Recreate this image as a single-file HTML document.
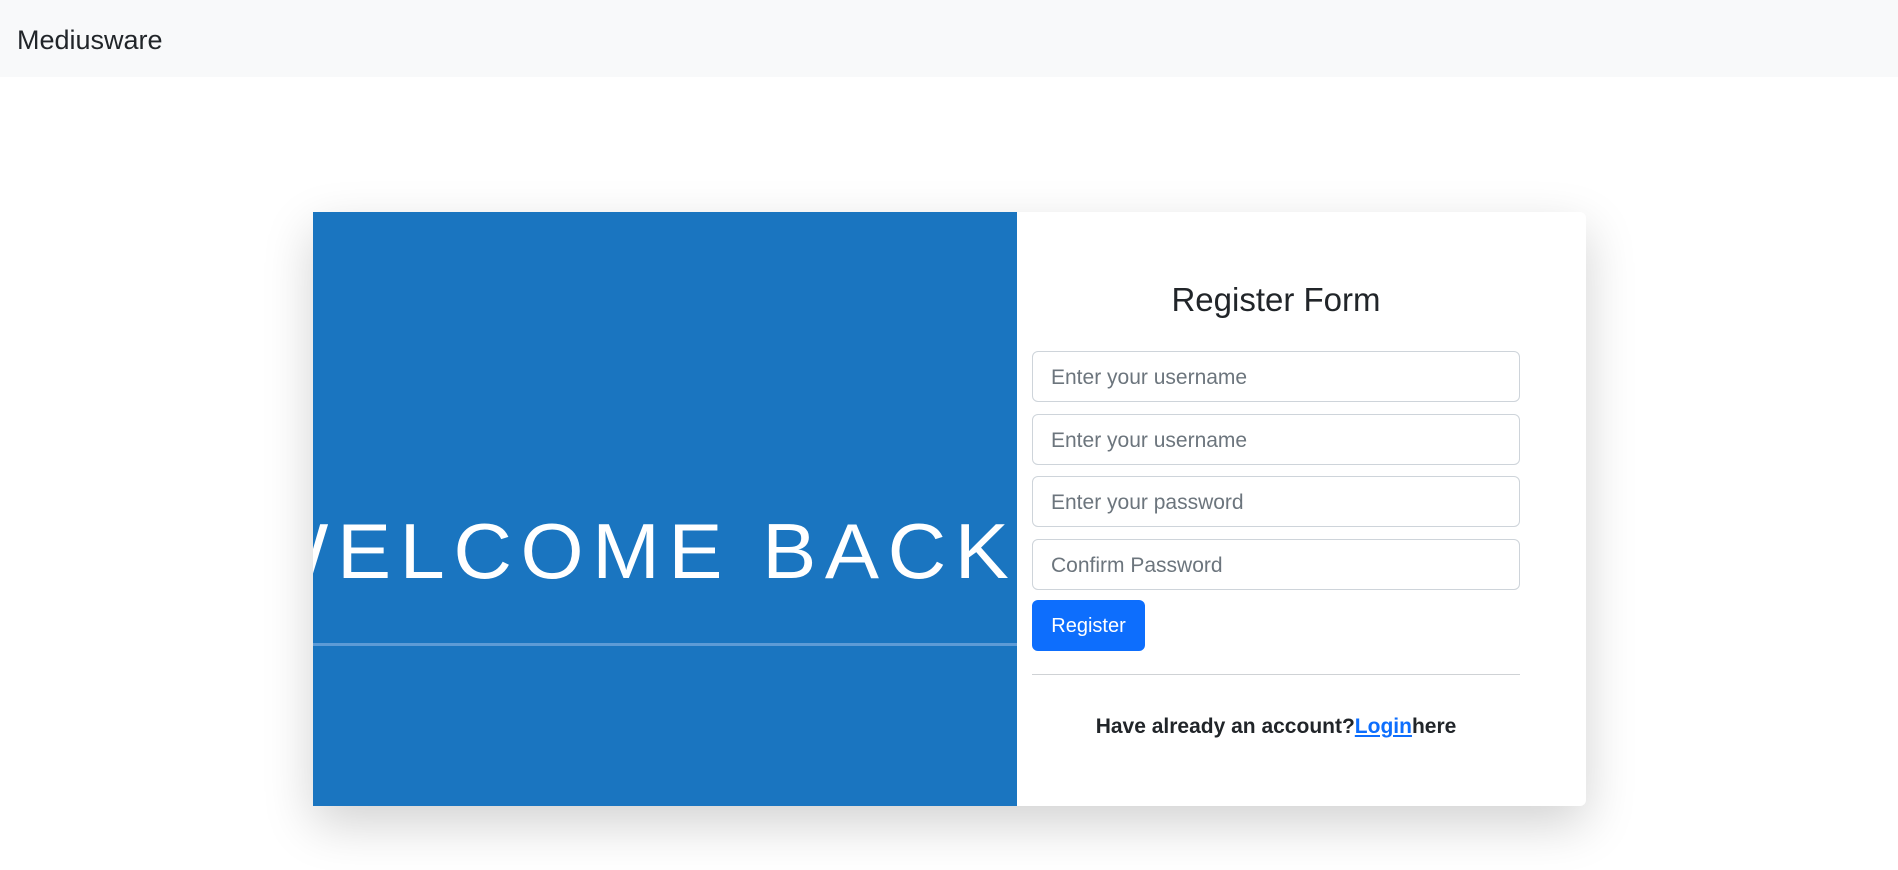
<!DOCTYPE html>
<html><head><meta charset="utf-8"><style>
*{box-sizing:border-box;margin:0;padding:0}
body{width:1898px;height:870px;background:#fff;font-family:"Liberation Sans",sans-serif;color:#212529;overflow:hidden;position:relative}
.nav{position:absolute;left:0;top:0;width:1898px;height:77px;background:#f8f9fa}
.brand{position:absolute;left:17px;top:25px;font-size:27px;color:#212529}
.card{position:absolute;left:313px;top:212px;width:1273px;height:594px;background:#fff;border-radius:6px;box-shadow:0 18px 50px rgba(0,0,0,.18)}
.blue{position:absolute;left:313px;top:212px;width:704px;height:594px;background:#1a75c0;overflow:hidden}
h3{position:absolute;left:1032px;width:488px;top:281px;text-align:center;font-size:33px;font-weight:500}
.inp{position:absolute;left:1032px;width:488px;height:51px;border:1px solid #ced4da;border-radius:6px;padding-left:18px;line-height:51px;font-size:21px;color:#6c757d}
.btn{position:absolute;left:1032px;top:600px;width:113px;height:51px;background:#0d6efd;border-radius:6px;color:#fff;font-size:20px;line-height:53px;text-align:center}
.hr{position:absolute;left:1032px;top:674px;width:488px;height:1px;background:#cfd2d5}
.foot{position:absolute;left:1032px;width:488px;top:715px;text-align:center;font-size:21px;font-weight:bold}
.foot a{color:#0d6efd;text-decoration:underline}
</style></head><body>
<div class="nav"><div class="brand">Mediusware</div></div>
<div class="card"></div>
<div class="blue">
<svg width="704" height="594" style="position:absolute;left:0;top:0">
<text x="-30" y="366" fill="#fff" font-family="Liberation Sans, sans-serif" font-size="78" textLength="728" lengthAdjust="spacing" transform="translate(-30,0) scale(1.04,1)" style="font-weight:normal">WELCOME BACK</text>
<rect x="0" y="431" width="704" height="3" fill="#5d9bd6"/>
</svg>
</div>
<h3>Register Form</h3>
<div class="inp" style="top:351px">Enter your username</div>
<div class="inp" style="top:414px">Enter your username</div>
<div class="inp" style="top:476px">Enter your password</div>
<div class="inp" style="top:539px">Confirm Password</div>
<div class="btn">Register</div>
<div class="hr"></div>
<div class="foot">Have already an account?<a>Login</a>here</div>
</body></html>
